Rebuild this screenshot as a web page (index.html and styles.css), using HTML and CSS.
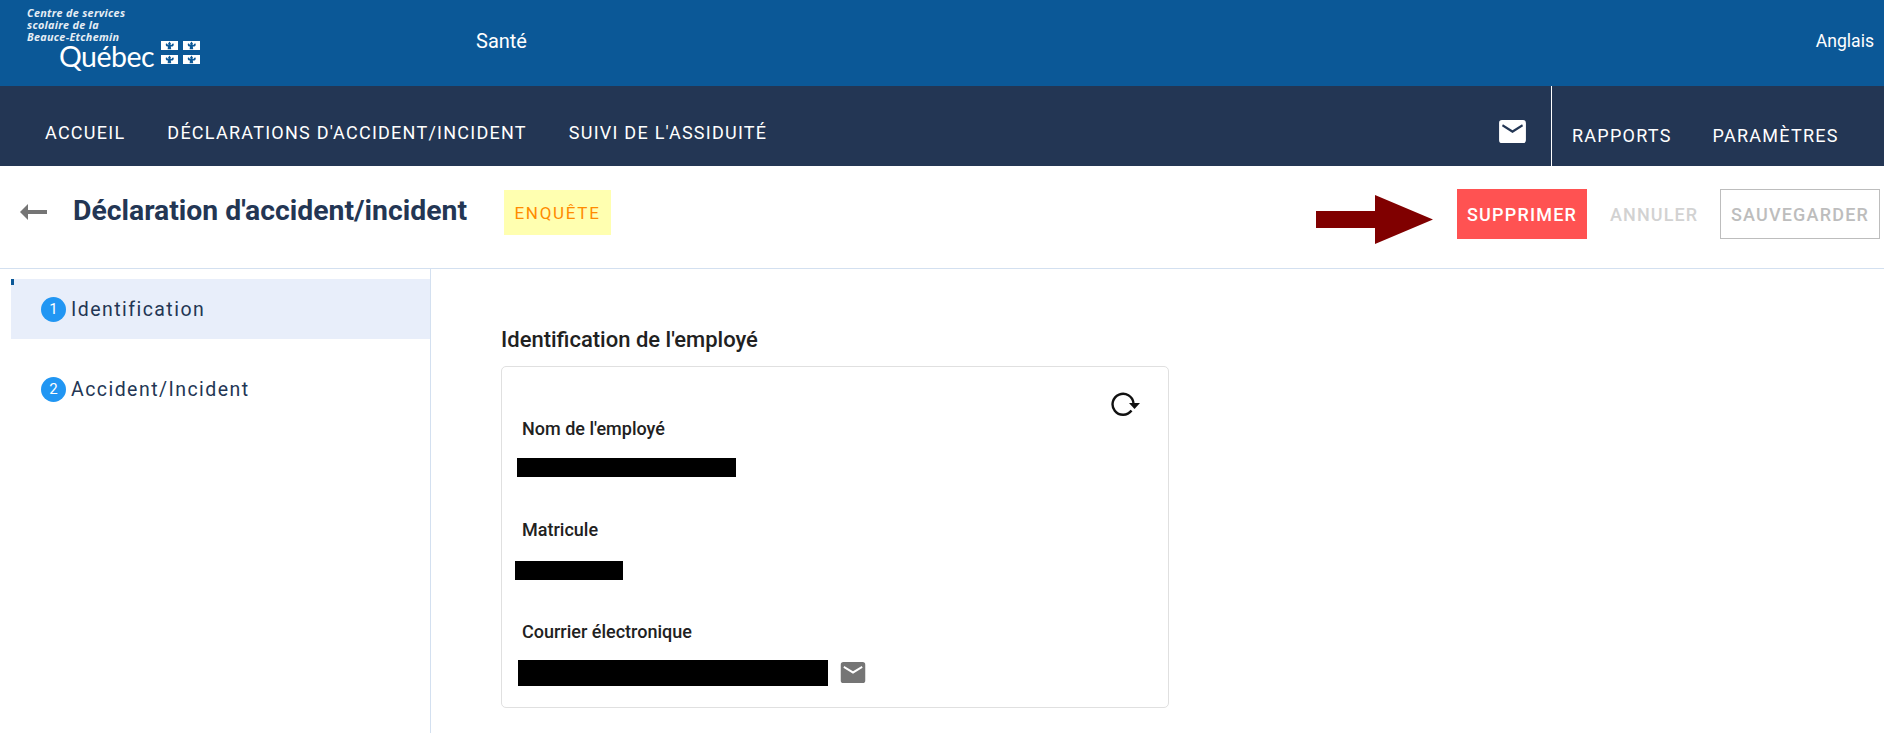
FILE: index.html
```html
<!DOCTYPE html>
<html lang="fr">
<head>
<meta charset="utf-8">
<title>Déclaration d'accident/incident</title>
<link rel="stylesheet" href="styles.css">
</head>
<body>
<svg class="defs" width="0" height="0" aria-hidden="true">
  <symbol id="flag" viewBox="0 0 17 9">
    <rect width="17" height="9" fill="#fff"/>
    <path d="M8.500 .5l1.500 2.200-.6 1.300h1.300c0-1 .7-1.500 1.800-1.500.5 1 .2 2.600-1 3h-1.700l.4 2.700H6.600l.4-2.700H6c-1.200-.4-1.500-2-1-3 1.100 0 1.800.5 1.800 1.500H7.600L7 2.700z" fill="#0b5897"/>
  </symbol>
  <symbol id="mail" viewBox="0 0 28 24">
    <path d="M3 0h22a3 3 0 0 1 3 3v18a3 3 0 0 1-3 3H3a3 3 0 0 1-3-3V3a3 3 0 0 1 3-3zm1 4.500l-1 2 11 7 11-7-1-2-10 6.200z" fill-rule="evenodd" fill="currentColor"/>
  </symbol>
</svg>
<header class="topbar">
  <div class="logo">
    <div class="logo-org">Centre de services<br>scolaire de la<br>Beauce-Etchemin</div>
    <div class="logo-row">
      <span class="logo-qc">Québec</span>
      <span class="flags">
        <svg class="flag"><use href="#flag"/></svg>
        <svg class="flag"><use href="#flag"/></svg>
        <svg class="flag"><use href="#flag"/></svg>
        <svg class="flag"><use href="#flag"/></svg>
      </span>
    </div>
  </div>
  <div class="app-name">Santé</div>
  <div class="lang">Anglais</div>
</header>
<nav class="mainnav">
  <a class="nav-link">ACCUEIL</a>
  <a class="nav-link">DÉCLARATIONS D'ACCIDENT/INCIDENT</a>
  <a class="nav-link">SUIVI DE L'ASSIDUITÉ</a>
  <svg class="nav-mail"><use href="#mail"/></svg>
  <div class="nav-right">
    <a class="nav-link">RAPPORTS</a>
    <a class="nav-link">PARAMÈTRES</a>
  </div>
</nav>
<section class="pagehead">
  <svg class="back" viewBox="0 0 27 16"><path d="M0 8l8-8v6h19v4H8v6z" fill="#757575"/></svg>
  <h1 class="title">Déclaration d'accident/incident</h1>
  <span class="badge">ENQUÊTE</span>
  <svg class="arrow" viewBox="0 0 117 49"><path d="M0 16h59V0l58 24.500L59 49V33H0z" fill="#800000"/></svg>
  <button class="btn btn-danger">SUPPRIMER</button>
  <button class="btn btn-text">ANNULER</button>
  <button class="btn btn-outline">SAUVEGARDER</button>
</section>
<div class="body">
  <aside class="sidebar">
    <div class="step step-active"><span class="step-num">1</span><span>Identification</span></div>
    <div class="step"><span class="step-num">2</span><span>Accident/Incident</span></div>
  </aside>
  <main class="content">
    <h2 class="section-title">Identification de l'employé</h2>
    <div class="card">
      <svg class="refresh" viewBox="0 0 30 26"><path d="M22.500 12A10.500 10.500 0 1 0 20.500 19.500" fill="none" stroke="#111" stroke-width="2.400"/><path d="M18 12h11l-5.500 6z" fill="#111"/></svg>
      <div class="field-label">Nom de l'employé</div>
      <div class="redact redact-name"></div>
      <div class="field-label">Matricule</div>
      <div class="redact redact-id"></div>
      <div class="field-label">Courrier électronique</div>
      <div class="email-row">
        <div class="redact redact-email"></div>
        <svg class="email-icon"><use href="#mail"/></svg>
      </div>
    </div>
  </main>
</div>
</body>
</html>
```

FILE: styles.css
```css
* { box-sizing: border-box; }
html, body { margin: 0; height: 100%; overflow: hidden; }
body { font-family: Roboto, "Liberation Sans", sans-serif; background: #fff; color: #212121; }
.defs { display: block; height: 0; }

.topbar { height: 86px; background: #0b5897; color: #fff; display: flex; align-items: center; }
.logo { width: 476px; height: 86px; padding: 7px 0 0 27px; flex: none; }
.logo-org { font: italic 700 10.800px/12.200px "Open Sans", sans-serif; letter-spacing: .3px; color: #e6eef5; }
.logo-row { display: flex; margin: 0 0 0 32px; align-items: flex-start; }
.logo-qc { font: 400 28.500px/24px Lato, sans-serif; letter-spacing: -.5px; }
.flags { display: grid; grid-template-columns: 17px 17px; column-gap: 5px; row-gap: 5px; margin: -3px 0 0 7px; }
.flag { width: 17px; height: 9px; display: block; }
.app-name { font-size: 20px; margin-top: -5px; }
.lang { margin-left: auto; padding-right: 10px; font-size: 17.600px; margin-top: -4px; }

.mainnav { height: 80px; background: #233654; color: #fff; display: flex; align-items: center; padding-left: 45px; }
.nav-link { font-size: 18px; letter-spacing: 1.250px; margin-right: 42px; white-space: nowrap; padding-top: 12px; }
.nav-mail { width: 27px; height: 23px; color: #fff; margin: 11px 25px 0 auto; flex: none; }
.nav-right { height: 80px; border-left: 1px solid #fff; padding: 18px 3px 0 20px; display: flex; align-items: center; width: 333px; flex: none; }
.nav-right .nav-link { padding-top: 0; margin-right: 41px; }
.nav-right .nav-link:last-child { margin-right: 0; }

.pagehead { height: 103px; border-bottom: 1px solid #d3e0f0; display: flex; align-items: flex-start; padding: 23px 4px 0 20px; }
.back { width: 27px; height: 16px; margin: 15px 26px 0 0; flex: none; }
.title { margin: 5px 37px 0 0; font-size: 28.350px; line-height: 34px; font-weight: 700; color: #233654; white-space: nowrap; }
.badge { width: 107px; height: 45px; margin-top: 1px; background: #ffffb0; color: #ff8c00; font-size: 17px; letter-spacing: 1.700px; font-weight: 400; display: flex; align-items: center; justify-content: center; }
.arrow { width: 117px; height: 49px; margin: 6px 24px 0 auto; flex: none; }
.btn { height: 50px; font-family: inherit; font-size: 18px; font-weight: 500; letter-spacing: 1.200px; background: none; border: 0; padding: 0; }
.btn-danger { width: 130px; background: #ff5252; color: #fff; }
.btn-text { width: 88px; margin: 0 22px 0 23px; color: #d2d2d2; letter-spacing: 1.100px; }
.btn-outline { width: 160px; border: 1px solid #bdbdbd; color: #bdbdbd; }

.body { display: flex; height: 464px; }
.sidebar { width: 431px; flex: none; border-right: 1px solid #d3e0f0; padding: 10px 0 0 11px; }
.step { height: 60px; display: flex; align-items: center; gap: 5px; padding-left: 30px; font-size: 19.500px; letter-spacing: 1.450px; color: #233654; margin-bottom: 20px; }
.step-active { background: #e8eefa; position: relative; }
.step-active::before { content: ""; position: absolute; left: 0; top: 0; width: 3px; height: 6px; background: #0b5897; }
.step-num { width: 25px; height: 25px; border-radius: 50%; background: #2196f3; color: #fff; font-size: 15px; letter-spacing: 0; display: flex; align-items: center; justify-content: center; }

.content { padding: 57px 0 0 70px; flex: 1; }
.section-title { margin: 0 0 12px; font-size: 22px; line-height: 28px; font-weight: 500; color: #212121; }
.card { width: 668px; height: 342px; border: 1px solid #e0e0e0; border-radius: 5px; padding: 50px 0 0 20px; position: relative; }
.refresh { position: absolute; top: 24px; right: 27px; width: 30px; height: 26px; }
.field-label { font-size: 18px; line-height: 24px; font-weight: 500; color: #212121; }
.redact { background: #000; }
.redact-name { width: 219px; height: 19px; margin: 17px 0 41px -5px; }
.redact-id { width: 108px; height: 19px; margin: 19px 0 40px -7px; }
.email-row { display: flex; align-items: flex-start; margin: 16px 0 0 -4px; }
.redact-email { width: 310px; height: 26px; }
.email-icon { width: 26px; height: 21px; margin: 2px 0 0 12px; color: #757575; }
```
